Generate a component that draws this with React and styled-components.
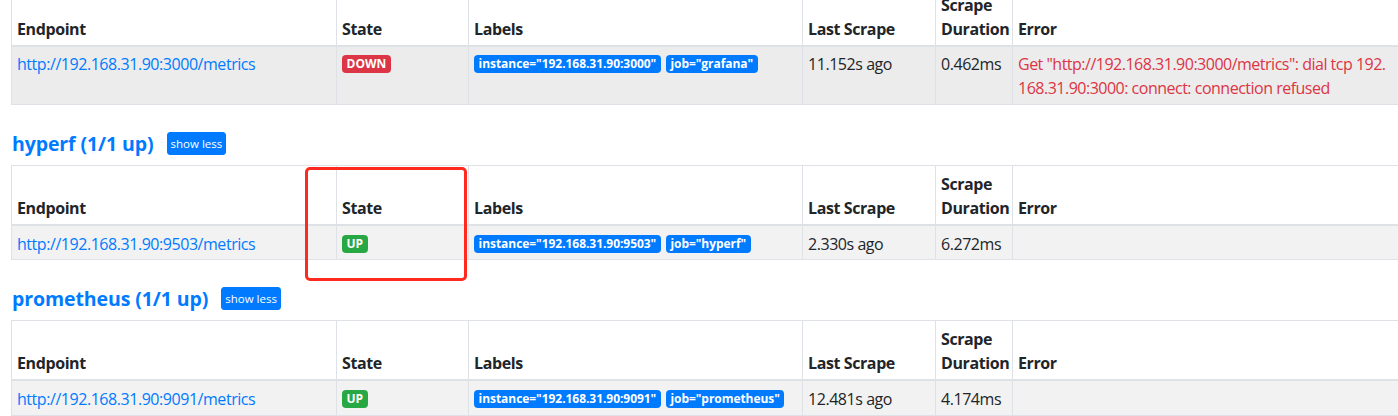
import React from "react";
import styled, { createGlobalStyle } from "styled-components";

const Global = createGlobalStyle`
  html, body {
    margin: 0;
    padding: 0;
    background: #fff;
    overflow: hidden;
  }
  body {
    font-family: "Open Sans", "Noto Sans", "Liberation Sans", sans-serif;
    font-size: 16px;
    line-height: 1.5;
    color: #212529;
  }
`;

const Page = styled.div`
  position: relative;
  width: 1398px;
  height: 416px;
  overflow: hidden;
`;

const Content = styled.div`
  margin-top: -14px;
  padding-left: 11px;
`;

const PoolHeader = styled.div`
  display: flex;
  align-items: center;
  gap: 13px;
  height: 23px;
  margin: 26.5px 0 10.5px 1px;
`;

const PoolTitle = styled.a`
  font-size: 19.5px;
  font-weight: 700;
  color: #007bff;
  text-decoration: none;
  line-height: 1.2;
  letter-spacing: -0.1px;
`;

const SmallButton = styled.button`
  font-family: inherit;
  font-size: 11.5px;
  line-height: 1.5;
  height: 23px;
  padding: 0 3px;
  border: 1px solid #007bff;
  border-radius: 3px;
  background: #007bff;
  color: #fff;
  cursor: pointer;
`;

const Table = styled.table`
  border-collapse: collapse;
  table-layout: fixed;
  width: 1420px;
`;

const Th = styled.th`
  text-align: left;
  vertical-align: bottom;
  font-weight: 700;
  padding: 5.8px 5px 3.8px;
  border: 1px solid #dee2e6;
  border-bottom: 2px solid #dee2e6;
  line-height: 24px;
  letter-spacing: -0.4px;
`;

const Row = styled.tr`
  background: ${(p) => (p.$hover ? "#ececec" : "#f2f2f2")};
`;

const Td = styled.td`
  vertical-align: top;
  padding: 5.8px 5px 3.8px;
  border: 1px solid #dee2e6;
  line-height: 24px;
  white-space: nowrap;
  letter-spacing: -0.45px;
`;

const ErrorTd = styled(Td)`
  white-space: normal;
  word-break: break-all;
  color: #dc3545;
  letter-spacing: -0.5px;
  padding-right: 38px;
`;

const Link = styled.a`
  color: #007bff;
  text-decoration: none;
`;

const Badge = styled.span`
  display: inline-block;
  padding: 3px 4.6px;
  font-size: 12px;
  font-weight: 700;
  line-height: 1;
  letter-spacing: -0.05px;
  color: #fff;
  background: ${(p) => p.$bg};
  border-radius: 4px;
  vertical-align: 2px;
  margin-right: ${(p) => (p.$gap ? "5px" : "0")};
`;

const Annotation = styled.div`
  position: absolute;
  left: 305px;
  top: 167px;
  width: 156px;
  height: 108px;
  border: 3px solid #ff2a1f;
  border-radius: 5px;
  pointer-events: none;
`;

const pools = [
  {
    name: null,
    hover: true,
    endpoint: "http://192.168.31.90:3000/metrics",
    state: "DOWN",
    labels: ['instance="192.168.31.90:3000"', 'job="grafana"'],
    last: "11.152s ago",
    dur: "0.462ms",
    error:
      'Get "http://192.168.31.90:3000/metrics": dial tcp 192.168.31.90:3000: connect: connection refused',
  },
  {
    name: "hyperf (1/1 up)",
    endpoint: "http://192.168.31.90:9503/metrics",
    state: "UP",
    labels: ['instance="192.168.31.90:9503"', 'job="hyperf"'],
    last: "2.330s ago",
    dur: "6.272ms",
    error: "",
  },
  {
    name: "prometheus (1/1 up)",
    endpoint: "http://192.168.31.90:9091/metrics",
    state: "UP",
    labels: ['instance="192.168.31.90:9091"', 'job="prometheus"'],
    last: "12.481s ago",
    dur: "4.174ms",
    error: "",
  },
];

function Pool({ p }) {
  return (
    <>
      {p.name && (
        <PoolHeader>
          <PoolTitle href="#">{p.name}</PoolTitle>
          <SmallButton>show less</SmallButton>
        </PoolHeader>
      )}
      <Table>
        <colgroup>
          <col style={{ width: 325 }} />
          <col style={{ width: 132 }} />
          <col style={{ width: 334 }} />
          <col style={{ width: 133 }} />
          <col style={{ width: 77 }} />
          <col />
        </colgroup>
        <thead>
          <tr>
            <Th>Endpoint</Th>
            <Th>State</Th>
            <Th>Labels</Th>
            <Th>Last Scrape</Th>
            <Th>Scrape Duration</Th>
            <Th>Error</Th>
          </tr>
        </thead>
        <tbody>
          <Row $hover={p.hover}>
            <Td>
              <Link href="#">{p.endpoint}</Link>
            </Td>
            <Td>
              <Badge $bg={p.state === "UP" ? "#28a745" : "#dc3545"}>{p.state}</Badge>
            </Td>
            <Td>
              {p.labels.map((l, i) => (
                <Badge key={l} $bg="#007bff" $gap={i < p.labels.length - 1}>
                  {l}
                </Badge>
              ))}
            </Td>
            <Td>{p.last}</Td>
            <Td>{p.dur}</Td>
            <ErrorTd>{p.error}</ErrorTd>
          </Row>
        </tbody>
      </Table>
    </>
  );
}

export default function App() {
  return (
    <Page>
      <Global />
      <Content>
        {pools.map((p, i) => (
          <Pool key={i} p={p} />
        ))}
      </Content>
      <Annotation />
    </Page>
  );
}
